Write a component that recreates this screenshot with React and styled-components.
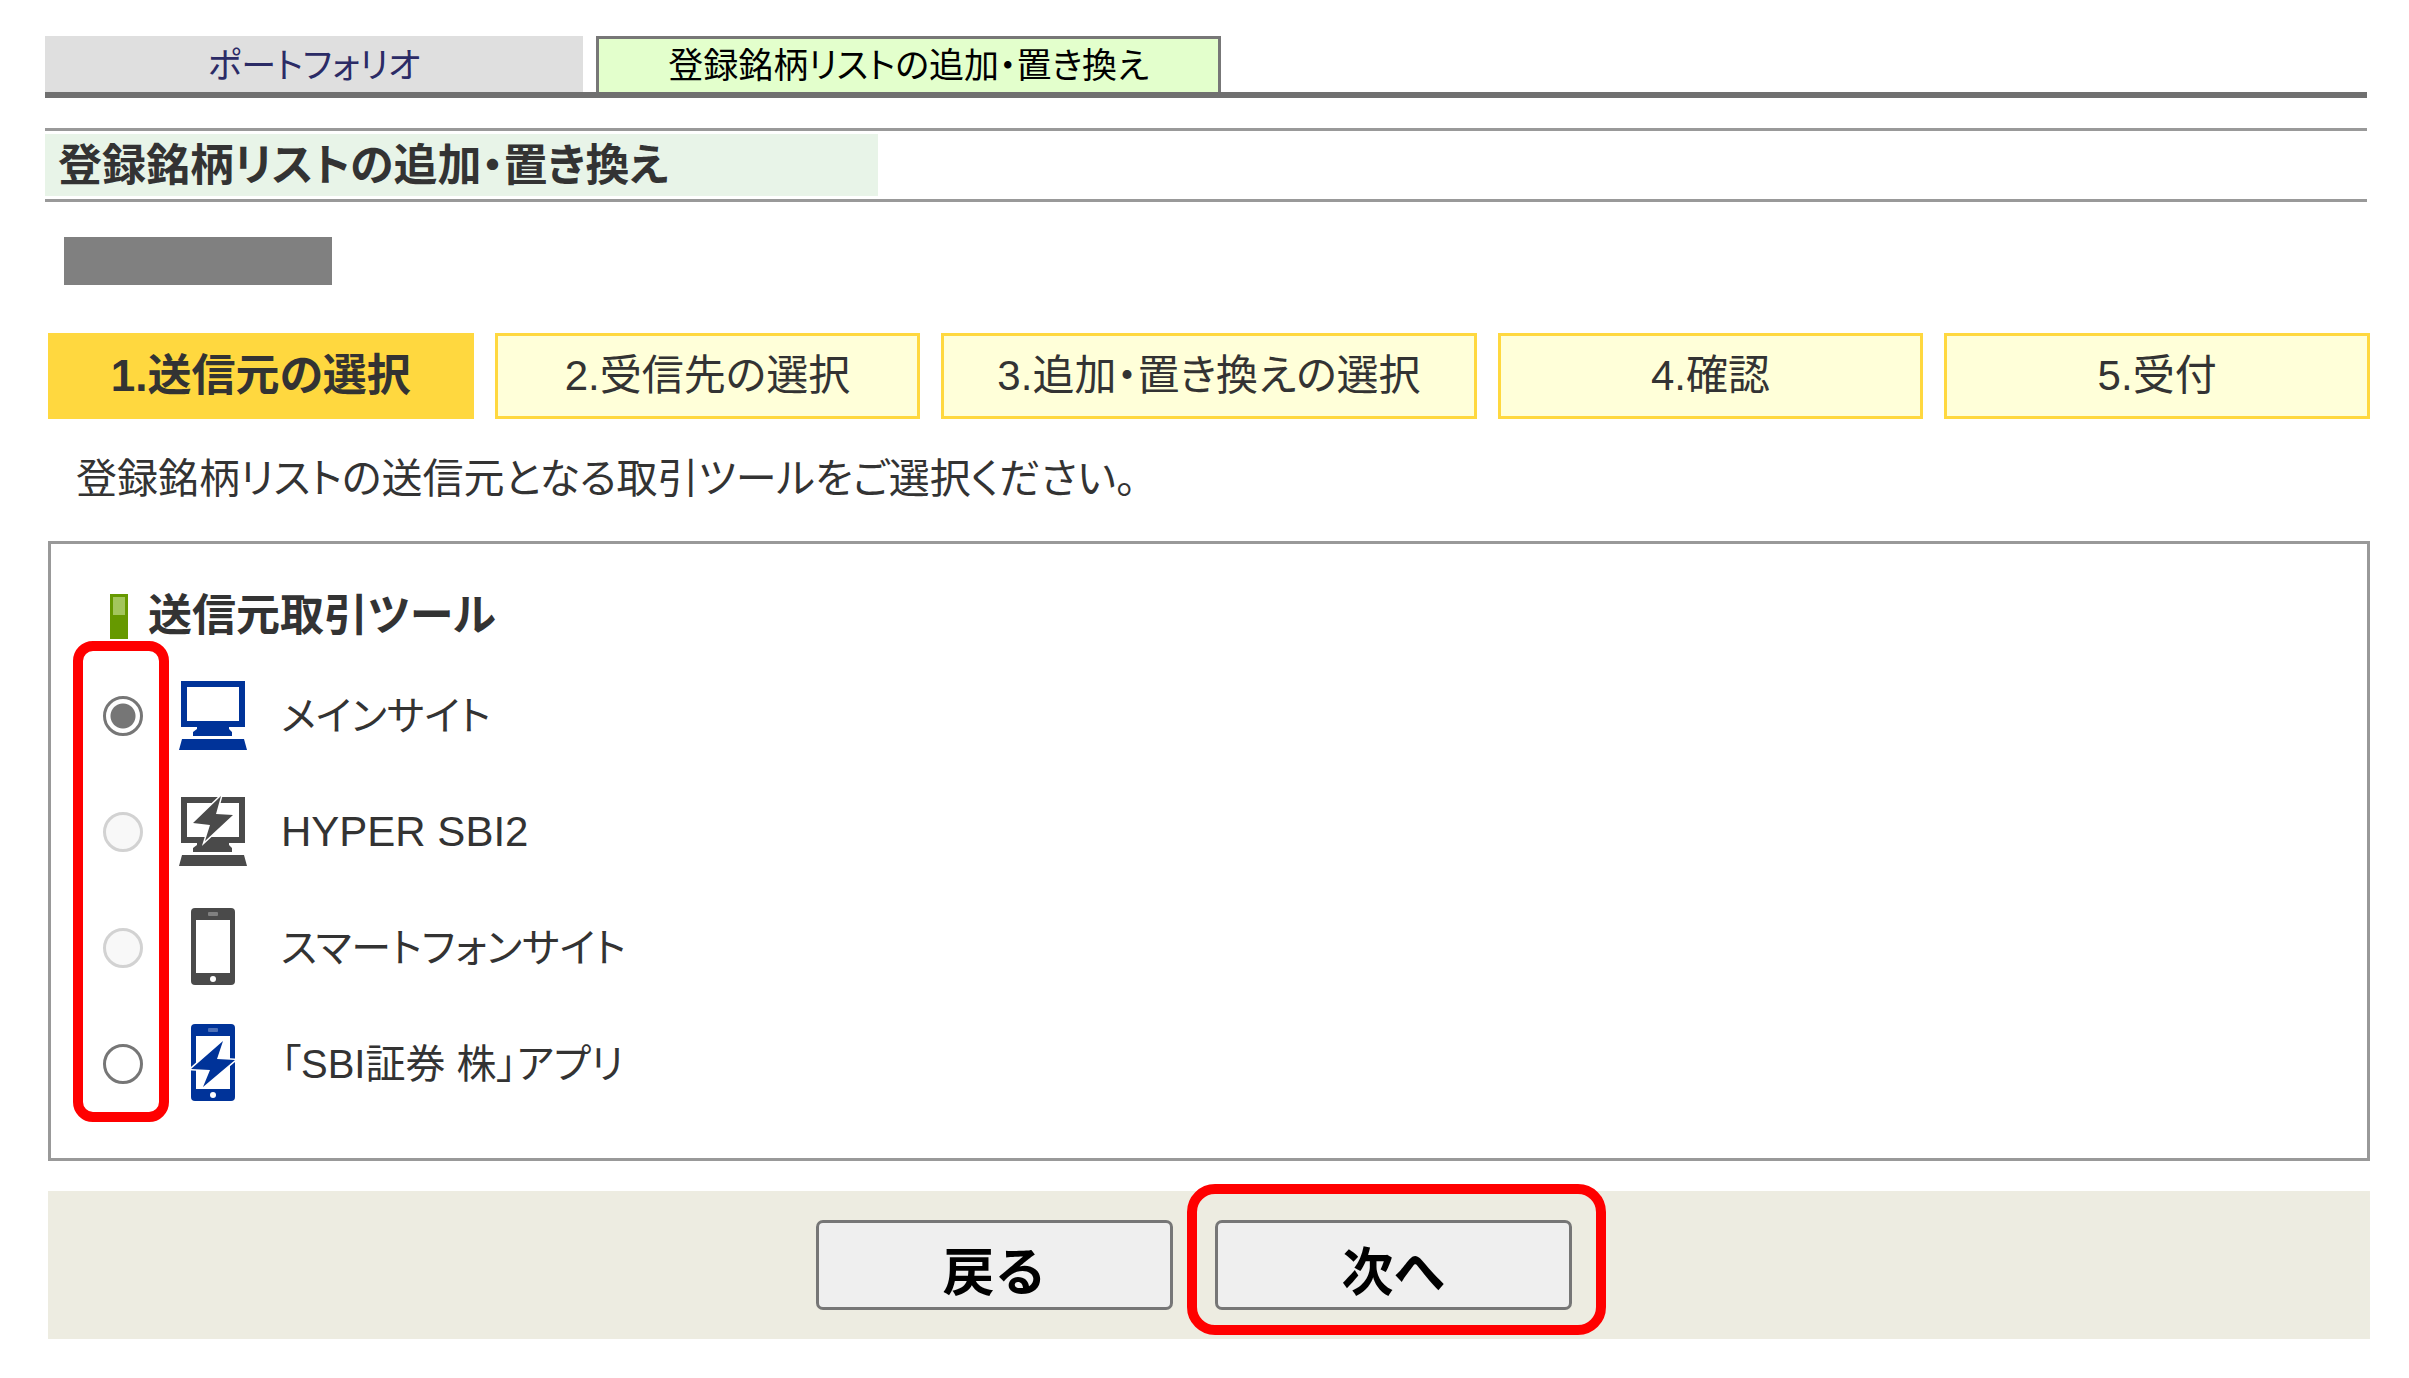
import React, { useState } from "react";

import styled, { createGlobalStyle, css } from "styled-components";

const BLUE = "#003399";
const GRAY = "#4a4a4a";

const steps = [
  { id: 1, label: "1.送信元の選択" },
  { id: 2, label: "2.受信先の選択" },
  { id: 3, label: "3.追加・置き換えの選択", wide: true },
  { id: 4, label: "4.確認" },
  { id: 5, label: "5.受付" },
];

const tools = [
  { id: "main", label: "メインサイト", icon: <ComputerIcon color={BLUE} /> },
  { id: "hyper", label: "HYPER SBI2", icon: <ComputerIcon color={GRAY} bolt />, disabled: true, latin: true },
  { id: "smartphone", label: "スマートフォンサイト", icon: <PhoneIcon color={GRAY} />, disabled: true },
  { id: "app", label: "「SBI証券 株」アプリ", icon: <PhoneIcon color={BLUE} bolt /> },
];

function ComputerIcon({ color, bolt }) {
  return (
    <ToolIcon viewBox="0 0 68 82" fill={color} aria-hidden="true">
      <path fillRule="evenodd" d="M2 6h64v46H2zM8 12v34h52V12z" />
      <path d="M14 61v-4l4-3v-4h32v4l3 3v4z" />
      <path d="M3 64h62l3 11H0z" />
      {bolt ? (
        <path d="M42 5 14 32l17 2-5 16 28-26-17-1z" stroke="#ffffff" strokeWidth="3" paintOrder="stroke" />
      ) : null}
    </ToolIcon>
  );
}

function PhoneIcon({ color, bolt }) {
  return (
    <ToolIcon viewBox="0 0 68 82" fill={color} aria-hidden="true">
      <rect x="12" y="1" width="44" height="77" rx="4" />
      <rect x="17" y="13" width="34" height="53" fill="#ffffff" />
      <rect x="29" y="5" width="10" height="4" rx="1" fill="#ffffff" opacity="0.3" />
      <circle cx="34" cy="72" r="3" fill="#ffffff" />
      {bolt ? (
        <path d="M44 18 12 46l19 1-7 17 32-27-18-1z" stroke="#ffffff" strokeWidth="3" paintOrder="stroke" />
      ) : null}
    </ToolIcon>
  );
}

function App() {
  const [selected, setSelected] = useState("main");

  return (
    <Page>
      <GlobalStyle />
      <Header>
        <Tabs>
          <Tab href="#portfolio">ポートフォリオ</Tab>
          <Tab href="#lists" $active aria-current="page">
            登録銘柄リストの追加・置き換え
          </Tab>
        </Tabs>
        <TitleBar>
          <PageTitle>登録銘柄リストの追加・置き換え</PageTitle>
        </TitleBar>
      </Header>

      <Content>
        <AccountMask />
        <Steps>
          {steps.map((step) => (
            <Step key={step.id} $wide={step.wide} $current={step.id === 1}>
              {step.label}
            </Step>
          ))}
        </Steps>
        <Lead>登録銘柄リストの送信元となる取引ツールをご選択ください。</Lead>

        <Panel>
          <PanelTitle>
            <Marker />
            送信元取引ツール
          </PanelTitle>
          <ToolList>
            {tools.map((tool) => (
              <ToolRow key={tool.id}>
                <Radio
                  type="radio"
                  name="tool"
                  id={tool.id}
                  checked={selected === tool.id}
                  disabled={tool.disabled}
                  onChange={() => setSelected(tool.id)}
                />
                <ToolLabel htmlFor={tool.id} $latin={tool.latin}>
                  {tool.icon}
                  {tool.label}
                </ToolLabel>
              </ToolRow>
            ))}
            <RadioHighlight />
          </ToolList>
        </Panel>

        <Footer>
          <ActionButton type="button">戻る</ActionButton>
          <ButtonWrapper>
            <ActionButton type="button">次へ</ActionButton>
            <ButtonHighlight />
          </ButtonWrapper>
        </Footer>
      </Content>
    </Page>
  );
}

const GlobalStyle = createGlobalStyle`
  body {
    margin: 0;
    background: #ffffff;
  }

  * {
    box-sizing: border-box;
  }
`;

const Page = styled.div`
  padding: 36px 39px 39px 45px;
  color: #333333;
  font-family: "Liberation Sans", "Noto Sans CJK JP", sans-serif;
  font-feature-settings: "palt";
  font-size: 42px;
  line-height: 60px;
`;

const Header = styled.header`
  margin-right: 3px;
`;

const Tabs = styled.nav`
  display: flex;
  gap: 13px;
  border-bottom: 6px solid #707070;
`;

const Tab = styled.a`
  width: 538px;
  height: 56px;
  background: #dfdfdf;
  color: #2b2b66;
  font-size: 35px;
  line-height: 60px;
  text-align: center;
  text-decoration: none;
  white-space: nowrap;

  ${(props) =>
    props.$active &&
    css`
      width: 625px;
      border: 3px solid #777777;
      border-bottom: none;
      background: #e3ffcc;
      color: #000000;
      line-height: 54px;
    `}
`;

const TitleBar = styled.div`
  margin-top: 30px;
  padding: 3px 0;
  border: solid #999999;
  border-width: 3px 0;
`;

const PageTitle = styled.h1`
  width: 833px;
  margin: 0;
  padding: 2px 0 0 13px;
  background: #e8f4e8;
  font-size: 44px;
  line-height: 60px;
`;

const Content = styled.main`
  margin-left: 3px;
`;

const AccountMask = styled.div`
  width: 268px;
  height: 48px;
  margin: 35px 0 48px 16px;
  background: #808080;
`;

const Steps = styled.ol`
  display: flex;
  gap: 21px;
  margin: 0;
  padding: 0;
  list-style: none;
`;

const Step = styled.li`
  flex: ${(props) => (props.$wide ? 536 : 425)} 1 0;
  height: 86px;
  border: 3px solid #ffd83f;
  background: ${(props) => (props.$current ? "#ffd83f" : "#ffffd9")};
  font-size: ${(props) => (props.$current ? "44px" : "42px")};
  font-weight: ${(props) => (props.$current ? "bold" : "normal")};
  line-height: 80px;
  text-align: center;
  white-space: nowrap;
`;

const Lead = styled.p`
  margin: 30px 0 32px;
  padding-left: 28px;
  font-size: 41px;
`;

const Panel = styled.section`
  padding: 42px 52px 36px;
  border: 3px solid #999999;
`;

const PanelTitle = styled.h2`
  display: flex;
  align-items: center;
  gap: 20px;
  margin: 0 0 12px;
  padding-left: 7px;
  font-size: 44px;
`;

const Marker = styled.span`
  width: 18px;
  height: 45px;
  border: 3px solid #669900;
  background: linear-gradient(#a3c65c 18px, #669900 18px);
`;

const ToolList = styled.div`
  position: relative;
`;

const ToolRow = styled.div`
  display: flex;
  align-items: center;
  gap: 36px;
  height: 116px;
`;

const Radio = styled.input`
  appearance: none;
  width: 40px;
  height: 40px;
  margin: 0;
  border: 3px solid #767676;
  border-radius: 50%;
  background: #ffffff;

  &:checked {
    background: radial-gradient(circle, #767676 12px, #ffffff 13px);
  }

  &:disabled {
    border-color: #d2d2d2;
    background: #f8f8f8;
  }
`;

const ToolLabel = styled.label`
  display: flex;
  align-items: center;
  gap: 34px;
  font-size: ${(props) => (props.$latin ? "42px" : "40px")};
  line-height: 64px;
`;

const ToolIcon = styled.svg`
  width: 68px;
  height: 82px;
`;

const highlight = css`
  position: absolute;
  border: 10px solid #ff0000;
  pointer-events: none;
`;

const RadioHighlight = styled.div`
  ${highlight}
  top: -17px;
  bottom: 0;
  left: -30px;
  width: 96px;
  border-radius: 20px;
`;

const Footer = styled.footer`
  display: flex;
  justify-content: center;
  gap: 42px;
  margin-top: 30px;
  padding: 29px 30px 29px 0;
  background: #edece1;
`;

const ButtonWrapper = styled.div`
  position: relative;
`;

const ButtonHighlight = styled.div`
  ${highlight}
  top: -36px;
  right: -34px;
  bottom: -25px;
  left: -28px;
  border-radius: 28px;
`;

const ActionButton = styled.button`
  width: 357px;
  height: 90px;
  padding: 8px 0 0;
  border: 3px solid #767676;
  border-radius: 7px;
  background: #efefef;
  color: #000000;
  font-family: "Noto Sans CJK JP", sans-serif;
  font-size: 52px;
  font-weight: bold;
  line-height: 76px;
`;

export default App;
